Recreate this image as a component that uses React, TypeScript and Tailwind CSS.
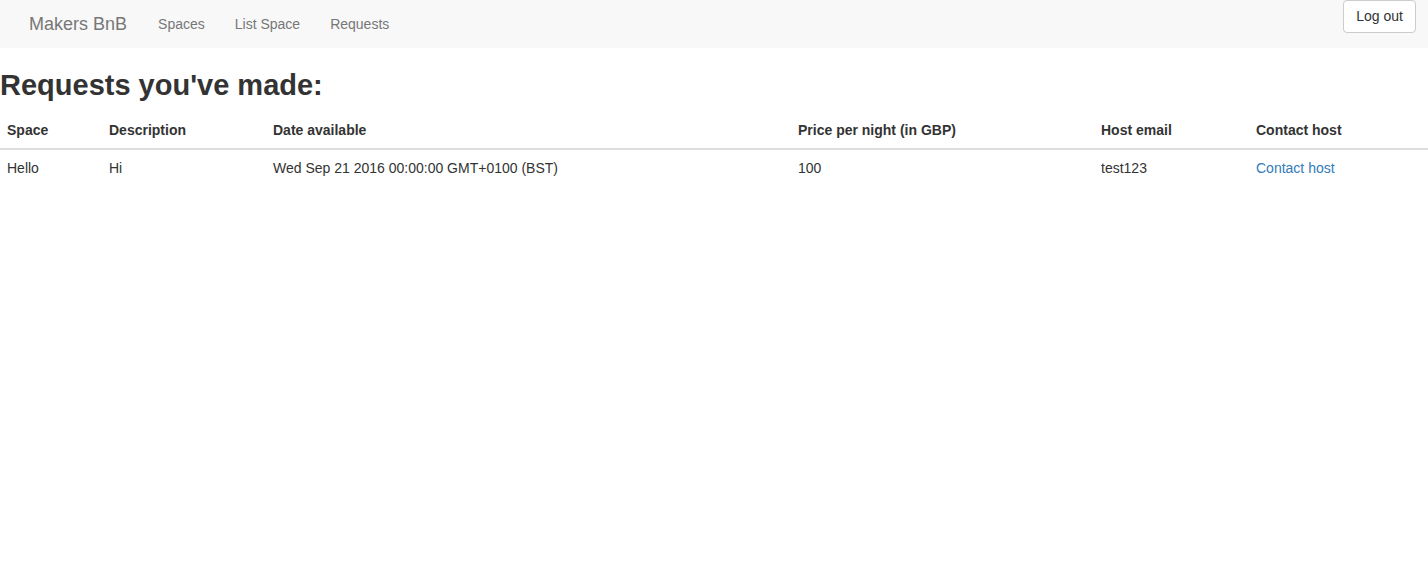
const rows = [
  {
    space: "Hello",
    description: "Hi",
    date: "Wed Sep 21 2016 00:00:00 GMT+0100 (BST)",
    price: "100",
    email: "test123",
  },
];

export default function App() {
  return (
    <div className="min-h-[582px] bg-white font-['Liberation_Sans',Arial,sans-serif] text-[14px] leading-[20px] text-[#333]">
      <nav className="flex h-[48px] items-start justify-between bg-[#f8f8f8]">
        <div className="flex h-[48px] items-center pl-[14px]">
          <a className="px-[15px] text-[18px] text-[#777]">Makers BnB</a>
          <a className="pl-[16px] pr-[15px] text-[#777]">Spaces</a>
          <a className="px-[15px] text-[#777]">List Space</a>
          <a className="px-[15px] text-[#777]">Requests</a>
        </div>
        <button className="mr-[12px] h-[33px] rounded-[4px] border border-[#ccc] bg-white px-[12px] pb-[2px] text-[#333]">
          Log out
        </button>
      </nav>

      <h1 className="mt-[17px] mb-[7px] text-[29px] leading-[40px] font-bold text-[#333]">
        Requests you've made:
      </h1>

      <table className="w-full table-fixed border-collapse text-left">
        <colgroup>
          <col className="w-[101px]" />
          <col className="w-[164px]" />
          <col className="w-[525px]" />
          <col className="w-[303px]" />
          <col className="w-[155px]" />
          <col />
        </colgroup>
        <thead>
          <tr className="border-b-2 border-[#ddd]">
            <th className="px-[7px] py-[8px] font-bold">Space</th>
            <th className="px-[8px] py-[8px] font-bold">Description</th>
            <th className="px-[8px] py-[8px] font-bold">Date available</th>
            <th className="px-[8px] py-[8px] font-bold">Price per night (in GBP)</th>
            <th className="px-[8px] py-[8px] font-bold">Host email</th>
            <th className="px-[8px] py-[8px] font-bold">Contact host</th>
          </tr>
        </thead>
        <tbody>
          {rows.map((r) => (
            <tr key={r.space}>
              <td className="px-[7px] pt-[8px] pb-[9px]">{r.space}</td>
              <td className="px-[8px] pt-[8px] pb-[9px]">{r.description}</td>
              <td className="px-[8px] pt-[8px] pb-[9px]">{r.date}</td>
              <td className="px-[8px] pt-[8px] pb-[9px]">{r.price}</td>
              <td className="px-[8px] pt-[8px] pb-[9px]">{r.email}</td>
              <td className="px-[8px] pt-[8px] pb-[9px]">
                <a className="text-[#337ab7]">Contact host</a>
              </td>
            </tr>
          ))}
        </tbody>
      </table>
    </div>
  );
}
